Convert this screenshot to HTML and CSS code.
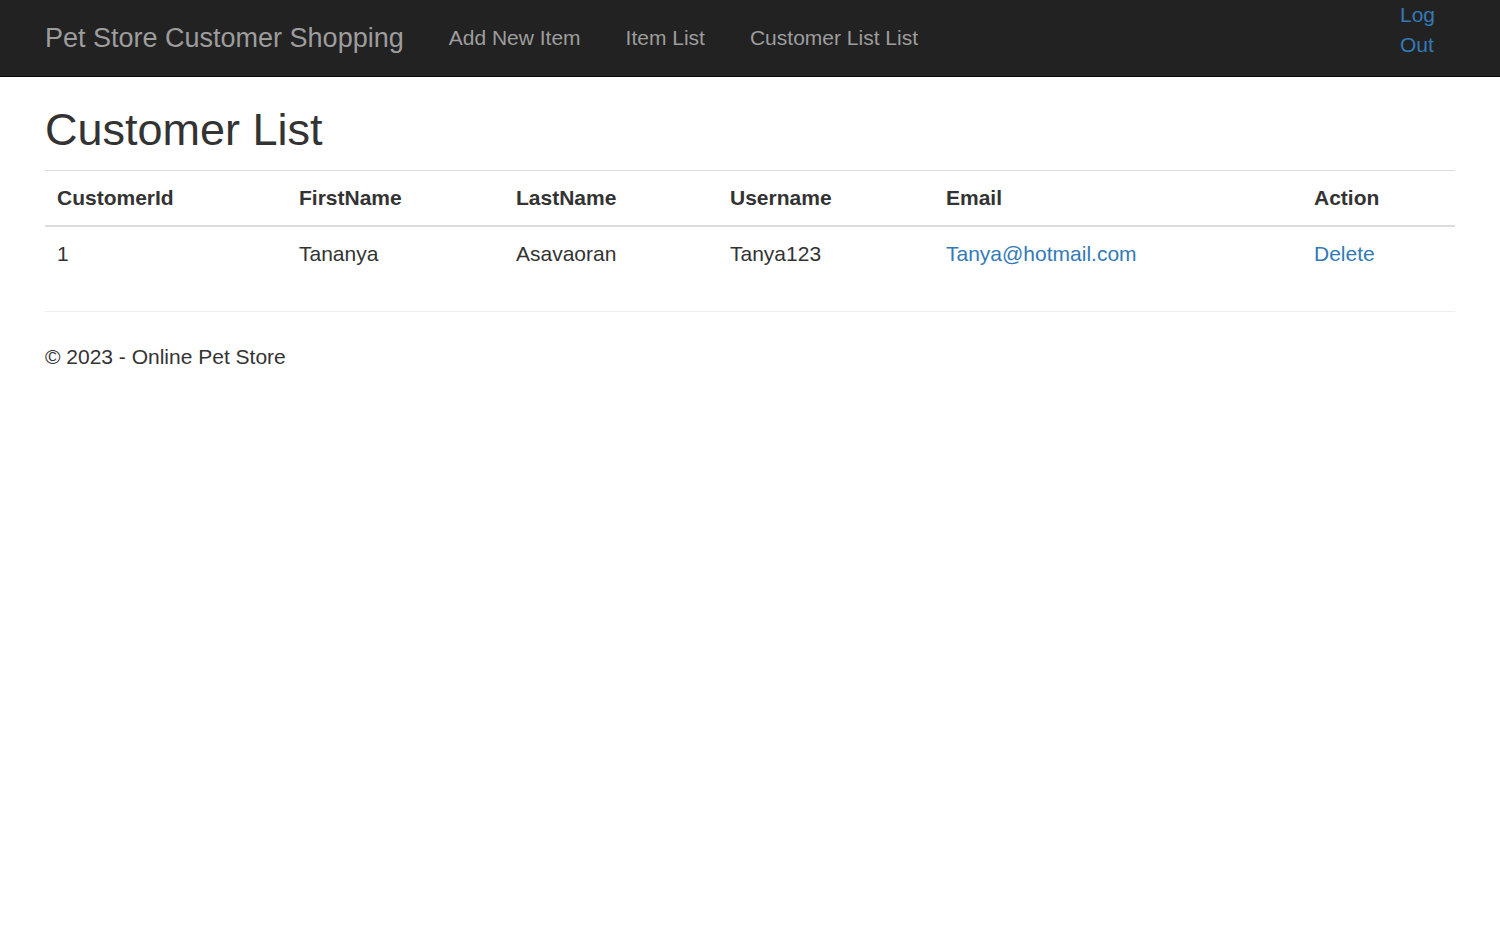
FILE: index.html
```html
<!DOCTYPE html>
<html>
<head>
<meta charset="utf-8">
<title>Customer List</title>
<link rel="stylesheet" href="styles.css">
</head>
<body>
<nav class="navbar">
  <div class="navbar-inner">
    <a class="brand" href="#">Pet Store Customer Shopping</a>
    <ul class="nav">
      <li><a href="#">Add New Item</a></li>
      <li><a href="#">Item List</a></li>
      <li><a href="#">Customer List List</a></li>
    </ul>
    <div class="spacer"></div>
    <a class="logout" href="#">Log Out</a>
  </div>
</nav>
<div class="container">
  <h2 class="title">Customer List</h2>
  <table class="table">
    <colgroup>
      <col class="c1"><col class="c2"><col class="c3"><col class="c4"><col class="c5"><col class="c6">
    </colgroup>
    <tr class="head">
      <th>CustomerId</th>
      <th>FirstName</th>
      <th>LastName</th>
      <th>Username</th>
      <th>Email</th>
      <th>Action</th>
    </tr>
    <tr class="row">
      <td>1</td>
      <td>Tananya</td>
      <td>Asavaoran</td>
      <td>Tanya123</td>
      <td><a href="#">Tanya@hotmail.com</a></td>
      <td><a href="#">Delete</a></td>
    </tr>
  </table>
  <hr class="rule">
  <footer class="footer">
    <p>© 2023 - Online Pet Store</p>
  </footer>
</div>
</body>
</html>
```

FILE: styles.css
```css
* { box-sizing: border-box; }
html, body { margin: 0; padding: 0; }
body {
  font-family: "Liberation Sans", Arial, Helvetica, sans-serif;
  font-size: 21px;
  line-height: 30px;
  color: #333;
  background: #fff;
}
a { color: #337ab7; text-decoration: none; }

.navbar {
  background: #222;
  border-bottom: 1px solid #080808;
  height: 77px;
}
.navbar-inner {
  display: flex;
  align-items: flex-start;
  height: 76px;
  padding: 0 0 0 22.5px;
}
.brand {
  display: block;
  padding: 22.5px;
  font-size: 27px;
  line-height: 30px;
  color: #9d9d9d;
}
.nav {
  display: flex;
  list-style: none;
  margin: 0;
  padding: 0;
}
.nav a {
  display: block;
  padding: 22.5px 22.5px;
  line-height: 30px;
  color: #9d9d9d;
}
.spacer { flex: 1; }
.logout {
  display: block;
  width: min-content;
  margin-right: 65px;
  line-height: 30px;
  color: #337ab7;
}

.container {
  padding: 0 45px;
}
.title {
  font-size: 45px;
  font-weight: 500;
  line-height: 49.5px;
  margin: 28px 0 15px;
}
.table {
  width: 100%;
  border-collapse: collapse;
  border-spacing: 0;
  margin-bottom: 30px;
  table-layout: fixed;
}
.c1 { width: 242px; }
.c2 { width: 217px; }
.c3 { width: 214px; }
.c4 { width: 216px; }
.c5 { width: 368px; }
.c6 { width: 153px; }
.table th, .table td {
  text-align: left;
  padding: 12px;
  line-height: 30px;
  vertical-align: top;
}
.head th {
  font-weight: bold;
  border-top: 1px solid #ddd;
  border-bottom: 2px solid #ddd;
}
.rule {
  border: 0;
  border-top: 1px solid #eee;
  margin: 0 0 30px;
}
.footer p { margin: 0 0 15px; }
```
